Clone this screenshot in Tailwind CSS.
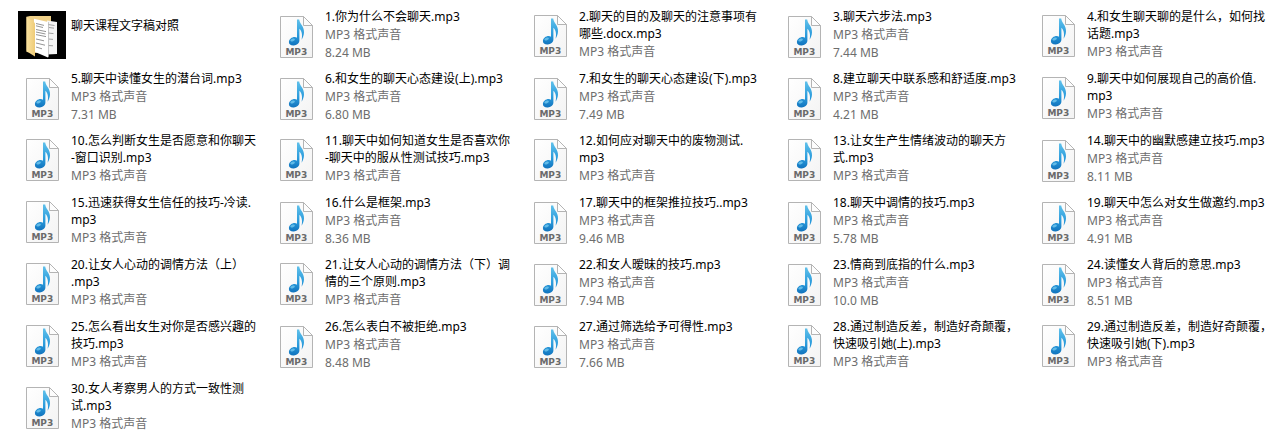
<!DOCTYPE html>
<html lang="zh-CN">
<head>
    <meta charset="UTF-8">
    <meta name="viewport" content="width=device-width, initial-scale=1.0">
    <title>聊天课程</title>
    <script src="https://cdn.jsdelivr.net/npm/@tailwindcss/browser@4"></script>
</head>
<body class="bg-white font-['Noto_Sans','Noto_Sans_CJK_SC',sans-serif] text-[12px] text-black">
    <svg class="absolute w-0 h-0" aria-hidden="true">
        <defs>
            <linearGradient id="page" x1="0" y1="0" x2="1" y2="1">
                <stop offset="0" stop-color="#ffffff"/>
                <stop offset="1" stop-color="#f3f3f3"/>
            </linearGradient>
            <linearGradient id="note" x1="0" y1="0" x2="0" y2="1">
                <stop offset="0" stop-color="#5fc0ea"/>
                <stop offset="0.6" stop-color="#2a9bdc"/>
                <stop offset="1" stop-color="#1173bd"/>
            </linearGradient>
            <linearGradient id="flap" x1="0" y1="0" x2="1" y2="0">
                <stop offset="0" stop-color="#fbe3a0"/>
                <stop offset="1" stop-color="#eecb78"/>
            </linearGradient>
        </defs>
    </svg>

    <main class="pl-4 pt-[7px] max-w-[1286px]">
        <ul id="files" class="grid grid-cols-5 auto-rows-[56px] gap-y-[6px]">
            <li class="flex items-center pl-[2px]">
                <svg class="w-12 h-12 shrink-0" viewBox="0 0 48 48" aria-hidden="true">
                    <rect width="48" height="48" fill="#000"/>
                    <path d="M8.5 5.8L12 5H33V38L18 42L8.5 41Z" fill="#efd088"/>
                    <path d="M29 9.5L39 11V43L29 43.5Z" fill="#f4f4f4"/>
                    <path d="M30 13.5L36.5 14.5M31 16.5L36 17.2M30 22L35.5 22.6M30.5 28L35 28.4M30.5 34.5L35 34.8" stroke="#8b8b8b" stroke-width="0.8"/>
                    <path d="M16 7.8L30 11V46.4L16 40.5Z" fill="#ffffff"/>
                    <path d="M18 12.5L26 14.4M18 14.8L25 16.5M18 18.5L28 20.6M18 21L27.5 23M18 23.6L28 25.6M18 28L26 29.8M18 32L27 34.2M18 36L24 37.8" stroke="#888888" stroke-width="0.9"/>
                    <path d="M30 11V46.4L30.8 45.6V11.3Z" fill="#b9b9b9"/>
                    <path d="M8.5 5.8L16.4 11.5Q17 12 17 13V45.6L9 40.4Q8.5 40 8.5 39Z" fill="url(#flap)"/>
                </svg>
                <div class="pl-[5px] pb-[19px]">
                    <p class="leading-[17px] whitespace-nowrap">聊天课程文字稿对照</p>
                </div>
            </li>
        </ul>
    </main>

    <script>
        // name lines, then size (only shown when the name fits on one line)
        const files = [
            [["1.你为什么不会聊天.mp3"], "8.24 MB"],
            [["2.聊天的目的及聊天的注意事项有", "哪些.docx.mp3"]],
            [["3.聊天六步法.mp3"], "7.44 MB"],
            [["4.和女生聊天聊的是什么，如何找", "话题.mp3"]],
            [["5.聊天中读懂女生的潜台词.mp3"], "7.31 MB"],
            [["6.和女生的聊天心态建设(上).mp3"], "6.80 MB"],
            [["7.和女生的聊天心态建设(下).mp3"], "7.49 MB"],
            [["8.建立聊天中联系感和舒适度.mp3"], "4.21 MB"],
            [["9.聊天中如何展现自己的高价值.", "mp3"]],
            [["10.怎么判断女生是否愿意和你聊天", "-窗口识别.mp3"]],
            [["11.聊天中如何知道女生是否喜欢你", "-聊天中的服从性测试技巧.mp3"]],
            [["12.如何应对聊天中的废物测试.", "mp3"]],
            [["13.让女生产生情绪波动的聊天方", "式.mp3"]],
            [["14.聊天中的幽默感建立技巧.mp3"], "8.11 MB"],
            [["15.迅速获得女生信任的技巧-冷读.", "mp3"]],
            [["16.什么是框架.mp3"], "8.36 MB"],
            [["17.聊天中的框架推拉技巧..mp3"], "9.46 MB"],
            [["18.聊天中调情的技巧.mp3"], "5.78 MB"],
            [["19.聊天中怎么对女生做邀约.mp3"], "4.91 MB"],
            [["20.让女人心动的调情方法（上）", ".mp3"]],
            [["21.让女人心动的调情方法（下）调", "情的三个原则.mp3"]],
            [["22.和女人暧昧的技巧.mp3"], "7.94 MB"],
            [["23.情商到底指的什么.mp3"], "10.0 MB"],
            [["24.读懂女人背后的意思.mp3"], "8.51 MB"],
            [["25.怎么看出女生对你是否感兴趣的", "技巧.mp3"]],
            [["26.怎么表白不被拒绝.mp3"], "8.48 MB"],
            [["27.通过筛选给予可得性.mp3"], "7.66 MB"],
            [["28.通过制造反差，制造好奇颠覆，", "快速吸引她(上).mp3"]],
            [["29.通过制造反差，制造好奇颠覆，", "快速吸引她(下).mp3"]],
            [["30.女人考察男人的方式一致性测", "试.mp3"]],
        ];

        const mp3Icon = `
            <svg class="w-12 h-12 shrink-0" viewBox="0 0 48 48" aria-hidden="true">
                <path d="M8.5 5.5H31.5L40.5 14.5V46.5H8.5Z" fill="url(#page)" stroke="#b4b4b4"/>
                <path d="M31.5 5.5V14.5H40.5Z" fill="#fdfdfd" stroke="#b4b4b4"/>
                <path d="M25 8.6H27.2C27.6 13 32.4 15.4 32 21.6C31.8 24.2 31 26.6 29.6 28.8C30.5 24.6 30.2 20.4 27.4 17.8V29.6C27.4 32.6 24.6 34.4 21.8 34.6C18.8 34.8 16.8 33.2 16.9 31C17 28.2 19.8 26.2 22.6 26.1C23.6 26.1 24.5 26.3 25 26.7Z" fill="url(#note)"/>
                <ellipse cx="20.6" cy="29" rx="2.4" ry="1.3" fill="#7fd2f3" opacity="0.7" transform="rotate(-20 20.6 29)"/>
                <text x="24.3" y="44" text-anchor="middle" font-family="DejaVu Sans, sans-serif" font-size="9" font-weight="700" fill="#6a6a6a">MP3</text>
            </svg>`;

        document.getElementById("files").insertAdjacentHTML("beforeend", files.map(([name, size]) => `
            <li class="flex items-center pl-[2px] ${size ? "pb-0" : "pb-[2px]"}">
                ${mp3Icon}
                <div class="pl-[5px] whitespace-nowrap">
                    <p class="leading-[17px] pb-px">${name.join("<br>")}</p>
                    <p class="leading-[18px] text-[#6d6d6d]">MP3 格式声音</p>
                    ${size ? `<p class="leading-[18px] text-[#6d6d6d]">${size}</p>` : ""}
                </div>
            </li>`).join(""));
    </script>
</body>
</html>
